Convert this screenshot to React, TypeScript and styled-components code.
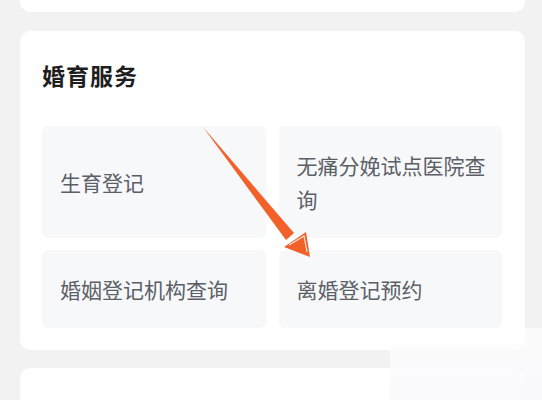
import React from 'react';
import styled, { createGlobalStyle } from 'styled-components';

const GlobalStyle = createGlobalStyle`
  html, body {
    margin: 0;
    padding: 0;
    background: #f2f2f2;
    overflow: hidden;
  }
  body {
    font-family: "Noto Sans CJK SC", "Noto Sans", sans-serif;
  }
`;

const Page = styled.div`
  position: relative;
  width: 542px;
  height: 400px;
  overflow: hidden;
  padding: 0 17px 0 20px;
  box-sizing: border-box;
  display: flex;
  flex-direction: column;
  gap: 19px;
`;

const Card = styled.div<{ $tail?: boolean }>`
  background: #ffffff;
  border-radius: ${(p) => (p.$tail ? '0 0 10px 10px' : '10px')};
  ${(p) => (p.$tail ? 'height: 12px; flex: none;' : '')}
`;

const ServiceCard = styled(Card)`
  padding: 27px 23px 22px 22px;
  margin-bottom: -1px;
  flex: none;
`;

const NextCard = styled(Card)`
  height: 60px;
  flex: none;
`;

const Title = styled.h2`
  margin: 0 0 34px;
  font-size: 23px;
  line-height: 34px;
  font-weight: 700;
  color: #1e1e1e;
  letter-spacing: 1px;
`;

const Grid = styled.div`
  display: grid;
  grid-template-columns: 1fr 1fr;
  gap: 12px 13px;
`;

const Tile = styled.div`
  background: #f7f8fa;
  border-radius: 6px;
  padding: 22px 8px 22px 18px;
  display: flex;
  align-items: center;
  font-size: 21px;
  line-height: 34px;
  color: #5b5f66;
`;

const Fade = styled.div`
  position: absolute;
  right: 0;
  bottom: 0;
  width: 152px;
  height: 72px;
  background: linear-gradient(180deg, rgba(255,255,255,0.7), rgba(249,249,252,0.95));
  pointer-events: none;
`;

const Overlay = styled.svg`
  position: absolute;
  left: 0;
  top: 0;
  pointer-events: none;
`;

const items = ['生育登记', '无痛分娩试点医院查询', '婚姻登记机构查询', '离婚登记预约'];

const Arrow = () => (
  <Overlay width="542" height="400" viewBox="0 0 542 400">
    <polygon points="203,127 294,233 286,240" fill="#f2612a" />
    <polygon points="284,247 306,232 310,257" fill="#f2612a" />
    <polyline points="289,245 304,236 307,252" fill="none" stroke="#ffe3d6" strokeWidth="1.2" />
  </Overlay>
);

export default function App() {
  return (
    <>
      <GlobalStyle />
      <Page>
        <Card $tail />
        <ServiceCard>
          <Title>婚育服务</Title>
          <Grid>
            {items.map((t) => (
              <Tile key={t}>{t}</Tile>
            ))}
          </Grid>
        </ServiceCard>
        <NextCard />
        <Fade />
        <Arrow />
      </Page>
    </>
  );
}
